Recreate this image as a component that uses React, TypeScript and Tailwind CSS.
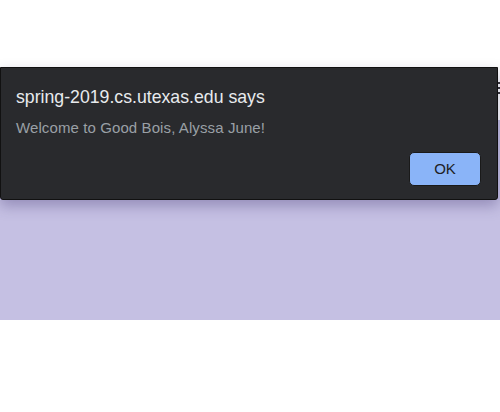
const TITLE = "spring-2019.cs.utexas.edu says";
const MESSAGE = "Welcome to Good Bois, Alyssa June!";

const Hamburger = () => (
  <div className="flex w-[14px] flex-col gap-[3px]">
    <span className="h-[2px] w-full bg-[#333]" />
    <span className="h-[2px] w-full bg-[#333]" />
    <span className="h-[2px] w-full bg-[#333]" />
  </div>
);

const AlertDialog = () => (
  <div className="absolute left-0 top-[67px] z-10 h-[133px] w-[498px] rounded-b-[3px] border border-[#111] bg-[#292a2d] shadow-[0_6px_14px_rgba(60,50,110,0.35)]">
    <div className="px-[15px] pt-[17px]">
      <p className="text-[17.7px] leading-[24px] text-[#e8eaed]">{TITLE}</p>
      <p className="mt-[9px] text-[15px] leading-[20px] tracking-[0.1px] text-[#9aa0a6]">
        {MESSAGE}
      </p>
    </div>
    <div className="flex justify-end pr-[16px] pt-[14px]">
      <button className="h-[34px] w-[72px] rounded-[5px] border border-[#1a1a1a] bg-[#8ab4f8] text-[15px] text-[#202124]">
        OK
      </button>
    </div>
  </div>
);

export default function App() {
  return (
    <div
      className="relative h-[412px] w-[500px] overflow-hidden bg-white"
      style={{ fontFamily: '"Liberation Sans", Arial, sans-serif' }}
    >
      <header className="flex h-[120px] items-start justify-end pt-[82px]">
        <div className="translate-x-[11px]">
          <Hamburger />
        </div>
      </header>
      <section className="h-[200px] bg-[#c5c0e3]" />
      <AlertDialog />
    </div>
  );
}
